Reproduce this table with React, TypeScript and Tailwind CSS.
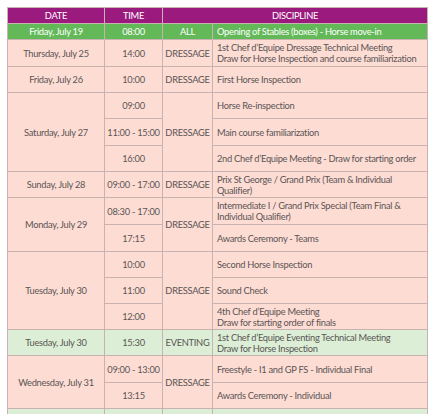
import React from "react";

const B = "border border-[#c9b3b0]";
const pink = "bg-[#fddcd3]";
const lgreen = "bg-[#dcefd6]";

function C({ children, className = "", rowSpan, left }: { children?: React.ReactNode; className?: string; rowSpan?: number; left?: boolean }) {
  return (
    <td rowSpan={rowSpan} className={`${B} ${left ? "text-left pl-[4px] pr-0" : "text-center px-0"} py-0 align-middle whitespace-nowrap ${className}`}>
      {children}
    </td>
  );
}

export default function App() {
  return (
    <div className="w-[438px] h-[414px] overflow-hidden bg-white pt-[7px] pl-[7px]" style={{ fontFamily: "Lato, 'Liberation Sans', sans-serif" }}>
      <table className="border-collapse table-fixed w-[420px] text-[9.3px] leading-[11px] tracking-[-0.28px] text-[#5b5555]">
        <colgroup>
          <col className="w-[97px]" />
          <col className="w-[58px]" />
          <col className="w-[50px]" />
          <col className="w-[215px]" />
        </colgroup>
        <tbody>
          <tr className="h-[16px] bg-[#9a1a7e] text-white">
            <C>DATE</C>
            <C>TIME</C>
            <td colSpan={2} className={`${B} text-center`}>DISCIPLINE</td>
          </tr>
          <tr className="h-[16px] bg-[#63b858] text-white">
            <C>Friday, July 19</C>
            <C>08:00</C>
            <C>ALL</C>
            <C left>Opening of Stables (boxes) - Horse move-in</C>
          </tr>
          <tr className={`h-[27px] ${pink}`}>
            <C>Thursday, July 25</C>
            <C>14:00</C>
            <C>DRESSAGE</C>
            <C left>1st Chef d’Equipe Dressage Technical Meeting<br />Draw for Horse Inspection and course familiarization</C>
          </tr>
          <tr className={`h-[26px] ${pink}`}>
            <C>Friday, July 26</C>
            <C>10:00</C>
            <C>DRESSAGE</C>
            <C left>First Horse Inspection</C>
          </tr>
          <tr className={`h-[26px] ${pink}`}>
            <C rowSpan={3}>Saturday, July 27</C>
            <C>09:00</C>
            <C rowSpan={3}>DRESSAGE</C>
            <C left>Horse Re-inspection</C>
          </tr>
          <tr className={`h-[27px] ${pink}`}>
            <C>11:00 - 15:00</C>
            <C left>Main course familiarization</C>
          </tr>
          <tr className={`h-[26px] ${pink}`}>
            <C>16:00</C>
            <C left>2nd Chef d’Equipe Meeting - Draw for starting order</C>
          </tr>
          <tr className={`h-[26px] ${pink}`}>
            <C>Sunday, July 28</C>
            <C>09:00 - 17:00</C>
            <C>DRESSAGE</C>
            <C left>Prix St George / Grand Prix (Team &amp; Individual<br />Qualifier)</C>
          </tr>
          <tr className={`h-[27px] ${pink}`}>
            <C rowSpan={2}>Monday, July 29</C>
            <C>08:30 - 17:00</C>
            <C rowSpan={2}>DRESSAGE</C>
            <C left>Intermediate I / Grand Prix Special (Team Final &amp;<br />Individual Qualifier)</C>
          </tr>
          <tr className={`h-[27px] ${pink}`}>
            <C>17:15</C>
            <C left>Awards Ceremony - Teams</C>
          </tr>
          <tr className={`h-[26px] ${pink}`}>
            <C rowSpan={3}>Tuesday, July 30</C>
            <C>10:00</C>
            <C rowSpan={3}>DRESSAGE</C>
            <C left>Second Horse Inspection</C>
          </tr>
          <tr className={`h-[26px] ${pink}`}>
            <C>11:00</C>
            <C left>Sound Check</C>
          </tr>
          <tr className={`h-[26px] ${pink}`}>
            <C>12:00</C>
            <C left>4th Chef d’Equipe Meeting<br />Draw for starting order of finals</C>
          </tr>
          <tr className={`h-[26px] ${lgreen}`}>
            <C>Tuesday, July 30</C>
            <C>15:30</C>
            <C>EVENTING</C>
            <C left>1st Chef d’Equipe Eventing Technical Meeting<br />Draw for Horse Inspection</C>
          </tr>
          <tr className={`h-[27px] ${pink}`}>
            <C rowSpan={2}>Wednesday, July 31</C>
            <C>09:00 - 13:00</C>
            <C rowSpan={2}>DRESSAGE</C>
            <C left>Freestyle - I1 and GP FS - Individual Final</C>
          </tr>
          <tr className={`h-[26px] ${pink}`}>
            <C>13:15</C>
            <C left>Awards Ceremony - Individual</C>
          </tr>
          <tr className={`h-[26px] ${lgreen}`}>
            <C />
            <C />
            <C />
            <C left />
          </tr>
        </tbody>
      </table>
    </div>
  );
}
